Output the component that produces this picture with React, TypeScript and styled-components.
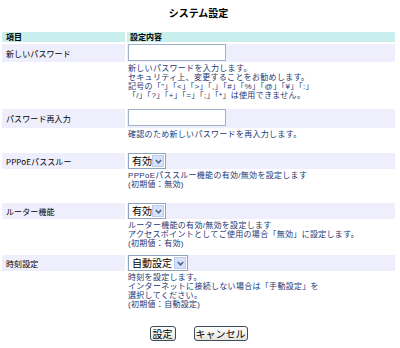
import React from 'react';
import styled, { createGlobalStyle } from 'styled-components';

const GlobalStyle = createGlobalStyle`
  body {
    margin: 0;
    background: #ffffff;
    font-family: "Noto Sans CJK JP", "DejaVu Sans", sans-serif;
  }
`;

const Page = styled.div`
  width: 400px;
  height: 348px;
  overflow: hidden;
`;

const Title = styled.h1`
  margin: 0 0 4px;
  width: 397px;
  height: 26px;
  line-height: 26px;
  text-align: center;
  font-size: 10px;
  font-weight: 700;
  color: #000;
`;

const Table = styled.table`
  border-collapse: separate;
  border-spacing: 2px;
  width: 397px;
  table-layout: fixed;
`;

const HeadCell = styled.th<{ $w?: number; $pl: number }>`
  ${(p) => (p.$w ? `width: ${p.$w}px;` : '')}
  height: 10px;
  padding: 0 0 0 ${(p) => p.$pl}px;
  background: #c8eeee;
  text-align: left;
  font-size: 8px;
  line-height: 10px;
  font-weight: 700;
  color: #000;
`;

const LabelCell = styled.td<{ $h: number }>`
  height: ${(p) => p.$h}px;
  padding: 0 0 0 4px;
  background: #eeeefc;
  font-size: 8px;
  letter-spacing: 0.1px;
  color: #000;
  vertical-align: middle;
`;

const ControlCell = styled.td`
  padding: 0 0 0 1px;
  background: #eeeefc;
  vertical-align: top;
`;

const EmptyCell = styled.td`
  padding: 0;
`;

const DescCell = styled.td<{ $pb: number }>`
  padding: 0 0 ${(p) => p.$pb}px 1px;
  vertical-align: top;
`;

const DescLine = styled.div`
  height: 9px;
  font-family: "Liberation Sans", "Noto Sans CJK JP", sans-serif;
  font-size: 8px;
  line-height: 9px;
  letter-spacing: 0.3px;
  color: #1e3672;
  white-space: nowrap;
`;

const TextInput = styled.input`
  display: block;
  box-sizing: border-box;
  width: 98px;
  height: 17px;
  margin: 0;
  border: 1px solid #9fb2c9;
  background: #fff;
  padding: 0 2px;
`;

const Dropdown = styled.div<{ $w: number }>`
  display: flex;
  box-sizing: border-box;
  width: ${(p) => p.$w}px;
  height: 16px;
  border: 1px solid #8fa3bd;
  background: #fff;
  padding: 1px;
`;

const NativeSelect = styled.select`
  appearance: none;
  flex: 1;
  min-width: 0;
  border: none;
  margin: 0;
  padding: 0 0 0 2px;
  background: transparent;
  font-family: "Noto Sans CJK JP", "DejaVu Sans", sans-serif;
  font-size: 10px;
  line-height: 12px;
  color: #000;
  outline: none;
`;

const ArrowBox = styled.span`
  display: flex;
  align-items: center;
  justify-content: center;
  width: 12px;
  background: #d6e2fb;
  border: 1px solid #b9cbf0;
  box-sizing: border-box;
`;

const ButtonBar = styled.div`
  display: flex;
  justify-content: center;
  gap: 18px;
  width: 397px;
  margin-top: 15px;
`;

const Button = styled.button<{ $w: number }>`
  box-sizing: border-box;
  width: ${(p) => p.$w}px;
  height: 15px;
  padding: 0;
  border: 1px solid #3f4a5a;
  border-radius: 3px;
  background: linear-gradient(#ffffff, #e6e6e0);
  font-family: "Noto Sans CJK JP", "DejaVu Sans", sans-serif;
  font-size: 10px;
  line-height: 12px;
  color: #000;
`;

const Chevron = () => (
  <svg width="7" height="5" viewBox="0 0 7 5">
    <path d="M0.8 1 L3.5 3.8 L6.2 1" fill="none" stroke="#4a5f8a" strokeWidth="1.5" />
  </svg>
);

const Select = ({ w, options }: { w: number; options: string[] }) => (
  <Dropdown $w={w}>
    <NativeSelect defaultValue={options[0]}>
      {options.map((o) => (
        <option key={o}>{o}</option>
      ))}
    </NativeSelect>
    <ArrowBox>
      <Chevron />
    </ArrowBox>
  </Dropdown>
);

type Setting = {
  label: string;
  h: number;
  control: React.ReactNode;
  lines: string[];
  pb: number;
};

const settings: Setting[] = [
  {
    label: '新しいパスワード',
    h: 18,
    control: <TextInput type="password" />,
    lines: [
      '新しいパスワードを入力します。',
      'セキュリティ上、変更することをお勧めします。',
      '記号の「"」「<」「>」「,」「#」「%」「@」「¥」「:」',
      '「/」「?」「+」「=」「;」「*」は使用できません。',
    ],
    pb: 7,
  },
  {
    label: 'パスワード再入力',
    h: 19,
    control: <TextInput type="password" />,
    lines: ['確認のため新しいパスワードを再入力します。'],
    pb: 12,
  },
  {
    label: 'PPPoEパススルー',
    h: 16,
    control: <Select w={38} options={['有効', '無効']} />,
    lines: ['PPPoEパススルー機能の有効/無効を設定します', '(初期値：無効)'],
    pb: 12,
  },
  {
    label: 'ルーター機能',
    h: 16,
    control: <Select w={38} options={['有効', '無効']} />,
    lines: [
      'ルーター機能の有効/無効を設定します',
      'アクセスポイントとしてご使用の場合「無効」に設定します。',
      '(初期値：有効)',
    ],
    pb: 5,
  },
  {
    label: '時刻設定',
    h: 16,
    control: <Select w={60} options={['自動設定', '手動設定']} />,
    lines: [
      '時刻を設定します。',
      'インターネットに接続しない場合は「手動設定」を',
      '選択してください。',
      '(初期値：自動設定)',
    ],
    pb: 0,
  },
];

export default function App() {
  return (
    <Page>
      <GlobalStyle />
      <Title>システム設定</Title>
      <Table>
        <thead>
          <tr>
            <HeadCell $w={119} $pl={4}>項目</HeadCell>
            <HeadCell $pl={3}>設定内容</HeadCell>
          </tr>
        </thead>
        <tbody>
          {settings.map((s) => (
            <React.Fragment key={s.label}>
              <tr>
                <LabelCell $h={s.h}>{s.label}</LabelCell>
                <ControlCell>{s.control}</ControlCell>
              </tr>
              <tr>
                <EmptyCell />
                <DescCell $pb={s.pb}>
                  {s.lines.map((l, i) => (
                    <DescLine key={i}>{l}</DescLine>
                  ))}
                </DescCell>
              </tr>
            </React.Fragment>
          ))}
        </tbody>
      </Table>
      <ButtonBar>
        <Button $w={26}>設定</Button>
        <Button $w={54}>キャンセル</Button>
      </ButtonBar>
    </Page>
  );
}
